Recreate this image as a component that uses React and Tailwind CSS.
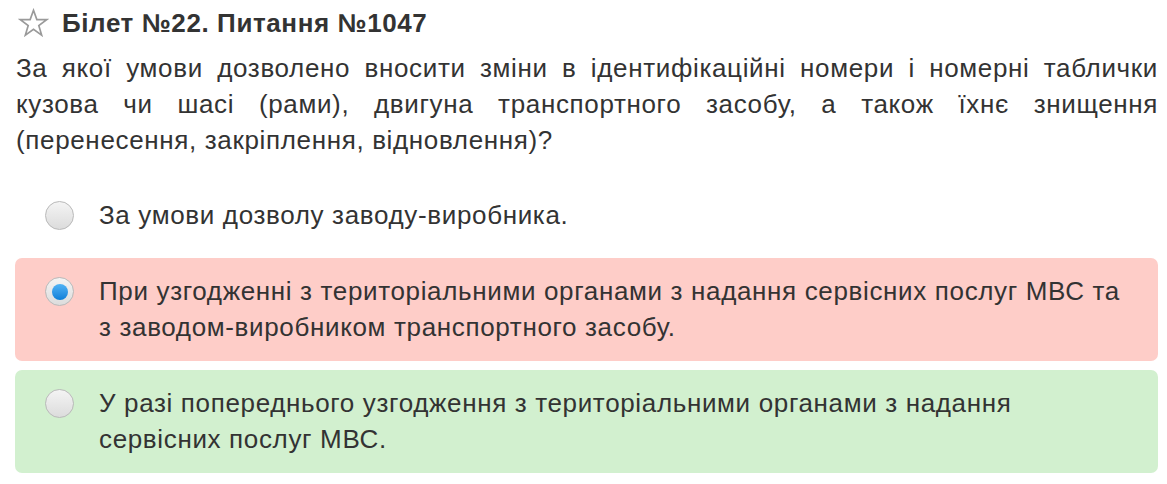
const OPTIONS = [
  { text: 'За умови дозволу заводу-виробника.', tone: 'plain', checked: false },
  {
    text: 'При узгодженні з територіальними органами з надання сервісних послуг МВС та з заводом-виробником транспортного засобу.',
    tone: 'wrong',
    checked: true,
  },
  {
    text: 'У разі попереднього узгодження з територіальними органами з надання сервісних послуг МВС.',
    tone: 'right',
    checked: false,
  },
];

const TONE_STYLES = {
  plain: 'bg-transparent',
  wrong: 'bg-[#fecdc8]',
  right: 'bg-[#d2f0cf]',
};

function Radio({ checked }) {
  return (
    <span className="relative mt-[4px] flex h-[29px] w-[29px] shrink-0 items-center justify-center rounded-full border border-[#b9b9b9] bg-gradient-to-b from-[#f4f4f4] to-[#dcdcdc]">
      {checked && (
        <span className="h-[16px] w-[16px] rounded-full bg-gradient-to-b from-[#4fb3f5] to-[#0a7fd8]" />
      )}
    </span>
  );
}

function StarIcon() {
  return (
    <svg width="31" height="31" viewBox="0 0 24 24" fill="none" stroke="#9a9a9a" strokeWidth="1.3" strokeLinejoin="miter">
      <polygon points="12,1.8 14.6,9 22.2,9 16.1,13.6 18.3,21 12,16.5 5.7,21 7.9,13.6 1.8,9 9.4,9" />
    </svg>
  );
}

export default function App() {
  return (
    <div className="min-h-[484px] w-[1167px] bg-white px-[15px] pt-[5px] text-[#333] [font-family:'Liberation_Sans',Arial,sans-serif]">
      {/* Title */}
      <div className="flex h-[36px] items-center gap-[13px] pl-[3px]">
        <StarIcon />
        <h1 className="text-[26px] font-bold leading-[36px] tracking-[0.6px] text-[#333]">Білет №22. Питання №1047</h1>
      </div>

      {/* Question */}
      <p className="mt-[9px] w-[1143px] pl-[1px] text-justify text-[26px] leading-[36px] tracking-[0.65px]">
        За якої умови дозволено вносити зміни в ідентифікаційні номери і номерні таблички кузова чи шасі (рами), двигуна транспортного засобу, а також їхнє знищення (перенесення, закріплення, відновлення)?
      </p>

      {/* Options */}
      <div className="mt-[24px] flex w-[1143px] flex-col gap-[9px]">
        {OPTIONS.map((opt, i) => (
          <div
            key={i}
            className={`flex items-start gap-[25px] rounded-[7px] pb-[16px] pl-[30px] pr-[30px] pt-[15px] ${TONE_STYLES[opt.tone]}`}
          >
            <Radio checked={opt.checked} />
            <span className="text-[26px] leading-[36px] tracking-[0.65px]">{opt.text}</span>
          </div>
        ))}
      </div>
    </div>
  );
}
